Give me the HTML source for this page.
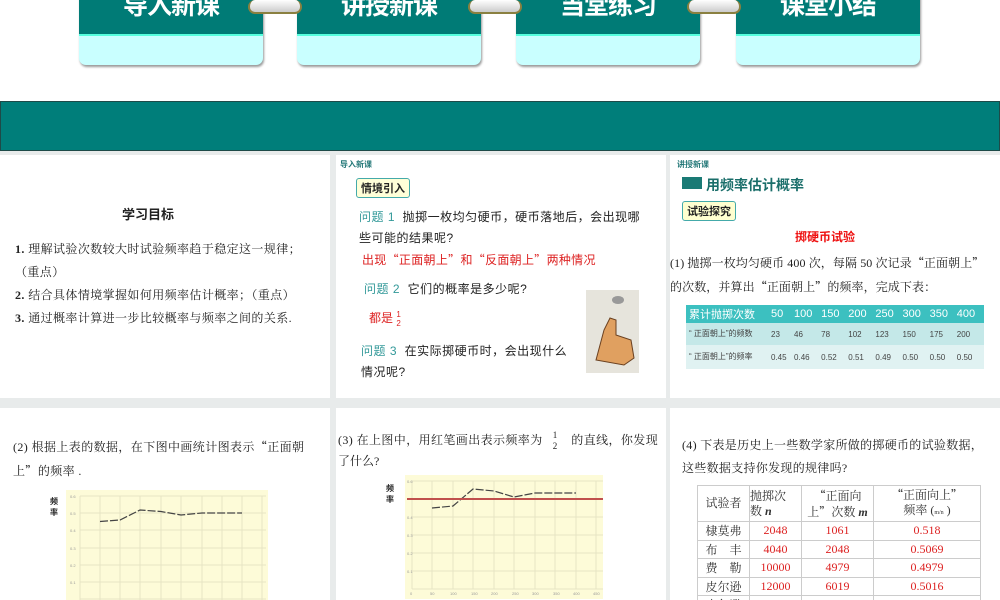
<!DOCTYPE html>
<html><head><meta charset="utf-8"><style>
*{margin:0;padding:0;box-sizing:border-box}
html,body{width:1000px;height:600px;overflow:hidden}
body{background:#fff;position:relative;font-family:"Liberation Sans","Noto Sans CJK SC",sans-serif;color:#222}
.a{position:absolute}
.q{font-family:"Noto Sans CJK SC",sans-serif}
.tab{position:absolute;top:-12px;width:184px;height:77px;border-radius:0 0 7px 7px;background:#c9ffff;box-shadow:1px 2px 2px #999;overflow:hidden}
.tab .t{height:48px;background:#007b76;color:#fff;font-weight:bold;font-size:25px;text-align:center;line-height:36px;letter-spacing:-1px;border-bottom:2px solid #5fd;}
.ring{position:absolute;top:0;width:54px;height:14px;border-radius:7px;background:linear-gradient(#fff,#ccc);border:2px solid #8a8040;border-top:none}
.panel{position:absolute;background:#fff;overflow:hidden}
.serif{font-family:"Liberation Serif","Noto Serif CJK SC",serif}
.lbl{position:absolute;border:1.5px solid #4aa;border-radius:3px;background:#ffffd0;font-weight:bold;font-size:11px;padding:1px 4px}
table{border-collapse:collapse}
</style></head><body>
<div class="tab" style="left:79px"><div class="t">导入新课</div></div>
<div class="tab" style="left:297px"><div class="t">讲授新课</div></div>
<div class="tab" style="left:516px"><div class="t">当堂练习</div></div>
<div class="tab" style="left:736px"><div class="t">课堂小结</div></div>
<div class="ring" style="left:248px"></div><div class="ring" style="left:468px"></div><div class="ring" style="left:687px"></div>

<div class="a" style="left:0;top:101px;width:1000px;height:50px;background:#007e7a;border:1px solid #1e4a48"></div>
<div class="a" style="left:0;top:151px;width:1000px;height:449px;background:#e8ebeb"></div>

<div class="panel" style="left:0;top:155px;width:330px;height:243px">
<div class="a" style="left:122px;top:49px;font-weight:bold;font-size:13px">学习目标</div>
<div class="a serif" style="left:15px;top:83px;font-size:12px;line-height:23px;width:312px;letter-spacing:0.4px">
<b>1.</b> 理解试验次数较大时试验频率趋于稳定这一规律；<br>（重点）<br><b>2.</b> 结合具体情境掌握如何用频率估计概率；（重点）<br><b>3.</b> 通过概率计算进一步比较概率与频率之间的关系.</div>
</div>

<div class="panel" style="left:336px;top:155px;width:330px;height:243px;font-size:12px">
<div class="a" style="left:4px;top:4px;font-size:8px;color:#277;font-weight:bold">导入新课</div>
<div class="lbl" style="left:20px;top:23px;background:#ffffd8">情境引入</div>
<div class="a" style="left:23px;top:52px;line-height:21px;width:292px;letter-spacing:0.5px"><span style="color:#399">问题 1</span>&nbsp; 抛掷一枚均匀硬币，硬币落地后，会出现哪些可能的结果呢?</div>
<div class="a" style="left:26px;top:96px;color:#d22;letter-spacing:0.3px">出现<span class="q">“</span>正面朝上<span class="q">”</span>和<span class="q">“</span>反面朝上<span class="q">”</span>两种情况</div>
<div class="a" style="left:28px;top:125px;letter-spacing:0.5px"><span style="color:#399">问题 2</span>&nbsp; 它们的概率是多少呢?</div>
<div class="a" style="left:33px;top:154px;color:#d22">都是 <span style="display:inline-block;vertical-align:middle;font-size:8px;line-height:9px;text-align:center">1<br>2</span></div>
<div class="a" style="left:25px;top:186px;line-height:21px;width:210px;letter-spacing:0.5px"><span style="color:#399">问题 3</span>&nbsp; 在实际掷硬币时，会出现什么情况呢?</div>
<div class="a" style="left:250px;top:135px;width:53px;height:83px;background:#e6e4dc">
<svg width="53" height="83"><ellipse cx="32" cy="10" rx="6" ry="4" fill="#999"/><path d="M10 70 L18 40 L24 28 L30 30 L30 45 L45 50 L48 68 L38 75 Z" fill="#e0a060" stroke="#6a4020" stroke-width="1"/></svg></div>
</div>

<div class="panel" style="left:670px;top:155px;width:330px;height:243px;font-size:12px">
<div class="a" style="left:7px;top:4px;font-size:8px;color:#277;font-weight:bold">讲授新课</div>
<div class="a" style="left:12px;top:22px;width:20px;height:12px;background:#1a7a75"></div>
<div class="a" style="left:36px;top:20px;font-size:14px;font-weight:bold;color:#1a6e6a">用频率估计概率</div>
<div class="lbl" style="left:12px;top:46px;background:#ffffd0">试验探究</div>
<div class="a" style="left:125px;top:73px;color:#e11;font-weight:bold">掷硬币试验</div>
<div class="a serif" style="left:0;top:96px;line-height:23px;width:340px;font-size:12px;letter-spacing:0.1px">(1) 抛掷一枚均匀硬币 400 次，每隔 50 次记录<span class="q">“</span>正面朝上<span class="q">”</span><br>的次数，并算出<span class="q">“</span>正面朝上<span class="q">”</span>的频率，完成下表：</div>
<table class="a" style="left:16px;top:150px;width:298px;font-size:8px;color:#444">
<tr style="background:#3cc0c0;color:#fff;font-size:11px;height:18px"><td style="padding-left:3px">累计抛掷次数</td><td>50</td><td>100</td><td>150</td><td>200</td><td>250</td><td>300</td><td>350</td><td>400</td></tr>
<tr style="background:#c4e8e8;height:22px"><td style="padding-left:3px;width:85px;line-height:10px">“ 正面朝上”的频数</td><td>23</td><td>46</td><td>78</td><td>102</td><td>123</td><td>150</td><td>175</td><td>200</td></tr>
<tr style="background:#e0f2f2;height:24px"><td style="padding-left:3px;line-height:10px">“ 正面朝上”的频率</td><td>0.45</td><td>0.46</td><td>0.52</td><td>0.51</td><td>0.49</td><td>0.50</td><td>0.50</td><td>0.50</td></tr>
</table>
</div>

<div class="panel" style="left:0;top:408px;width:330px;height:192px">
<div class="a serif" style="left:13px;top:27px;font-size:12px;line-height:23px;width:318px;letter-spacing:0.4px">(2) 根据上表的数据，在下图中画统计图表示<span class="q">“</span>正面朝上<span class="q">”</span>的频率 .</div>
<div class="a" style="left:50px;top:88px;font-size:8px;font-weight:bold;line-height:11px">频<br>率</div>
</div>
<svg class="a" style="left:66px;top:490px" width="202" height="110">
<rect width="202" height="110" fill="#fdfbd8"/>
<g stroke="#e6e4c4" stroke-width="1">
<path d="M14 6H200M14 23H200M14 40H200M14 58H200M14 75H200M14 92H200M14 109H200"/>
<path d="M14 6V110M34 6V110M54 6V110M74 6V110M95 6V110M115 6V110M136 6V110M156 6V110M176 6V110M196 6V110"/></g>
<g font-size="4" fill="#999"><text x="4" y="8">0.6</text><text x="4" y="25">0.5</text><text x="4" y="42">0.4</text><text x="4" y="60">0.3</text><text x="4" y="77">0.2</text><text x="4" y="94">0.1</text></g>
<polyline points="34,31.5 54,30 74,20 95,21.5 115,25 136,23 156,23 176,23" fill="none" stroke="#444" stroke-width="1.2" stroke-dasharray="8 2"/>
</svg>

<div class="panel" style="left:336px;top:408px;width:330px;height:192px">
<div class="a serif" style="left:2px;top:21px;font-size:12px;line-height:23px;width:340px;white-space:nowrap;letter-spacing:0.4px">(3) 在上图中，用红笔画出表示频率为 &nbsp;&nbsp;<span style="display:inline-block;vertical-align:middle;font-size:9px;line-height:11px;text-align:center">1<br>2</span>&nbsp;&nbsp;&nbsp; 的直线，你发现</div>
<div class="a serif" style="left:2px;top:44px;font-size:12px">了什么?</div>
<div class="a" style="left:50px;top:75px;font-size:8px;font-weight:bold;line-height:11px">频<br>率</div>
</div>
<svg class="a" style="left:405px;top:475px" width="198" height="124">
<rect width="198" height="124" fill="#fdfbd8"/>
<g stroke="#e6e4c4" stroke-width="1">
<path d="M7 6H198M7 24H198M7 42H198M7 60H198M7 78H198M7 96H198M7 114H198"/>
<path d="M7 6V114M27 6V114M48 6V114M68 6V114M89 6V114M109 6V114M130 6V114M150 6V114M171 6V114M191 6V114"/></g>
<g font-size="4" fill="#999"><text x="2" y="8">0.6</text><text x="2" y="44">0.4</text><text x="2" y="62">0.3</text><text x="2" y="80">0.2</text><text x="2" y="98">0.1</text><text x="5" y="120">0</text><text x="25" y="120">50</text><text x="45" y="120">100</text><text x="66" y="120">150</text><text x="86" y="120">200</text><text x="107" y="120">250</text><text x="127" y="120">300</text><text x="148" y="120">350</text><text x="168" y="120">400</text><text x="188" y="120">450</text></g>
<polyline points="27,33 48,31 68,14 89,16 109,22 130,18 150,18 171,18" fill="none" stroke="#444" stroke-width="1.2" stroke-dasharray="8 2"/>
<line x1="2" y1="24" x2="198" y2="24" stroke="#c0504d" stroke-width="2"/>
</svg>

<div class="panel" style="left:670px;top:408px;width:330px;height:192px">
<div class="a serif" style="left:12px;top:26px;font-size:12px;line-height:23px;width:318px;letter-spacing:0.3px">(4) 下表是历史上一些数学家所做的掷硬币的试验数据，<br>这些数据支持你发现的规律吗?</div>
<table class="a serif" style="left:27px;top:77px;width:284px;font-size:12px;text-align:center;color:#d22;table-layout:fixed" border="1" bordercolor="#ccc">
<col style="width:52px"><col style="width:52px"><col style="width:72px"><col>
<tr style="color:#333;line-height:15px;height:36px"><td>试验者</td><td style="text-align:left">抛掷次<br>数 <i><b>n</b></i></td><td><span class="q">“</span>正面向上<span class="q">”</span>次数 <i><b>m</b></i></td><td><span class="q">“</span>正面向上<span class="q">”</span><br>频率 (<span style="font-size:6px">m/n</span> )</td></tr>
<tr style="height:18.5px"><td style="color:#333">棣莫弗</td><td>2048</td><td>1061</td><td>0.518</td></tr>
<tr style="height:18.5px"><td style="color:#333">布&nbsp;&nbsp;&nbsp;&nbsp;丰</td><td>4040</td><td>2048</td><td>0.5069</td></tr>
<tr style="height:18.5px"><td style="color:#333">费&nbsp;&nbsp;&nbsp;&nbsp;勒</td><td>10000</td><td>4979</td><td>0.4979</td></tr>
<tr style="height:18.5px"><td style="color:#333">皮尔逊</td><td>12000</td><td>6019</td><td>0.5016</td></tr>
<tr style="height:18.5px"><td style="color:#333">皮尔逊</td><td>24000</td><td>12012</td><td>0.5005</td></tr>
</table>
</div>
</body></html>
